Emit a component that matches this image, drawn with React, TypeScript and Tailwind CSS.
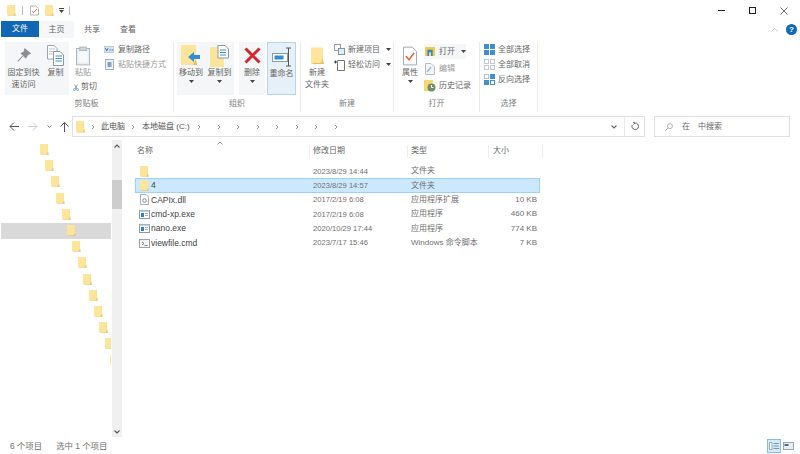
const FONT = "font-['Liberation_Sans','Noto_Sans_CJK_SC',sans-serif]";

const Folder = ({ w = 11, h = 14 }: { w?: number; h?: number }) => (
  <svg width={w} height={h} viewBox="0 0 11 14" className="shrink-0">
    <rect x="0" y="0" width="10" height="13" fill="#fbe08c" />
    <path d="M8 13 L10 9.5 L11 13.8 L2 13.8 L0 13 Z" fill="#e3c163" />
    <rect x="0" y="0" width="9" height="12.5" fill="#fde59b" />
  </svg>
);

const Arrow = () => (
  <svg width="5" height="3" viewBox="0 0 5 3" className="shrink-0">
    <path d="M0 0 H5 L2.5 3 Z" fill="#444" />
  </svg>
);

const Chevron = () => (
  <svg width="4" height="6" viewBox="0 0 4 6" className="shrink-0">
    <path d="M1 1 L3 3 L1 5" fill="none" stroke="#888" strokeWidth="0.9" />
  </svg>
);

const PinIcon = () => (
  <svg width="16" height="16" viewBox="0 0 16 18">
    <path d="M9 1 L15 6 L12 7.5 L10 11 L5 6 L8 4.5 Z M6.5 9 L1 15" fill="#8a8f96" stroke="#8a8f96" strokeWidth="1.2" />
  </svg>
);

const CopyIcon = () => (
  <svg width="17" height="21" viewBox="0 0 17 21">
    <path d="M0.5 0.5 H7 L10 3.5 V14 H0.5 Z" fill="#fff" stroke="#9aa5b1" />
    <path d="M2 4 H8 M2 6.5 H8 M2 9 H8" stroke="#b6c3cf" />
    <path d="M6.5 6.5 H13 L16.5 10 V20.5 H6.5 Z" fill="#fff" stroke="#8d99a6" />
    <path d="M8.5 11 H15 M8.5 13.5 H15 M8.5 16 H15" stroke="#3f8fce" />
  </svg>
);

const PasteIcon = () => (
  <svg width="15" height="20" viewBox="0 0 16 20">
    <rect x="0.5" y="2" width="14" height="17.5" fill="#e8edf1" stroke="#a9b4be" />
    <rect x="4" y="0.5" width="7" height="3.5" fill="#cfd6dc" stroke="#a9b4be" />
    <rect x="2.5" y="5" width="10" height="12" fill="#f6f8f9" />
  </svg>
);

const ScissorsIcon = () => (
  <svg width="9" height="11" viewBox="0 0 10 11">
    <path d="M2.5 0.5 L6.5 8 M7.5 0.5 L3.5 8" stroke="#666" strokeWidth="1" fill="none" />
    <circle cx="2.4" cy="9" r="1.6" fill="none" stroke="#2f7fc1" />
    <circle cx="7.6" cy="9" r="1.6" fill="none" stroke="#2f7fc1" />
  </svg>
);

const PathIcon = () => (
  <svg width="10" height="7" viewBox="0 0 11 7">
    <rect x="0" y="0" width="11" height="7" fill="#d5e5f3" stroke="#8fb2d0" strokeWidth="0.6" />
    <path d="M1.5 2 L3 5 L4.5 2 M6 4 H7.5 M8.5 4 H10" stroke="#2a5f8f" strokeWidth="0.9" fill="none" />
  </svg>
);

const ShortcutIcon = () => (
  <svg width="9" height="11" viewBox="0 0 9 11">
    <rect x="0.5" y="0.5" width="8" height="10" fill="#eef2f6" stroke="#a6b2bd" />
    <rect x="2.5" y="3" width="4" height="5" fill="#7ea5c6" />
  </svg>
);

const MoveIcon = () => (
  <svg width="20" height="21" viewBox="0 0 20 21">
    <rect x="0" y="0" width="15" height="20" fill="#fce49a" />
    <path d="M12 20 L15 14 L16 20 Z" fill="#e2bf60" />
    <path d="M19 10 V14 H13 V17 L7 12 L13 7 V10 Z" fill="#2f8fd6" />
  </svg>
);

const CopyToIcon = () => (
  <svg width="19" height="22" viewBox="0 0 19 22">
    <rect x="0" y="2" width="14" height="20" fill="#fce49a" />
    <path d="M8 0.5 H15 L18.5 4 V13 H8 Z" fill="#fff" stroke="#8d99a6" />
    <path d="M10 5 H16 M10 7.5 H16 M10 10 H16" stroke="#3f8fce" />
  </svg>
);

const DeleteIcon = () => (
  <svg width="17" height="17" viewBox="0 0 17 17">
    <path d="M1.5 1.5 L15.5 15.5 M15.5 1.5 L1.5 15.5" stroke="#d8232a" strokeWidth="3" />
  </svg>
);

const RenameIcon = () => (
  <svg width="20" height="20" viewBox="0 0 20 20">
    <rect x="0.5" y="6.5" width="15" height="8" fill="#fff" stroke="#8d99a6" />
    <rect x="2.5" y="8.5" width="9" height="4" fill="#2f8fd6" />
    <path d="M14 1 H19 M16.5 1 V19 M14 19 H19" stroke="#555" strokeWidth="1" fill="none" />
  </svg>
);

const NewItemIcon = () => (
  <svg width="11" height="11" viewBox="0 0 11 11">
    <rect x="0.5" y="0.5" width="6" height="6" fill="#fff" stroke="#8d99a6" />
    <rect x="4.5" y="4.5" width="6" height="6" fill="#e5edf4" stroke="#7f96ab" />
  </svg>
);

const EasyIcon = () => (
  <svg width="11" height="12" viewBox="0 0 11 12">
    <path d="M3.5 1.5 H10.5 V11.5 H3.5 Z" fill="#fff" stroke="#6f7880" />
    <path d="M0 3 H3 M1.5 1.5 V4.5" stroke="#444" />
  </svg>
);

const PropsIcon = () => (
  <svg width="14" height="20" viewBox="0 0 15 20">
    <path d="M0.5 0.5 H10 L14.5 5 V19.5 H0.5 Z" fill="#fff" stroke="#9aa5b1" />
    <path d="M3 10 L6.5 14 L12 6.5" fill="none" stroke="#e0673a" strokeWidth="1.6" />
  </svg>
);

const OpenIcon = () => (
  <svg width="10" height="9" viewBox="0 0 11 10">
    <rect x="0" y="0" width="11" height="10" fill="#f2c94c" />
    <rect x="2.5" y="3" width="6" height="7" fill="#3d86c6" />
    <rect x="4.5" y="6" width="2" height="4" fill="#f2e3a6" />
  </svg>
);

const EditIcon = () => (
  <svg width="10" height="12" viewBox="0 0 10 12">
    <path d="M0.5 0.5 H6 L9.5 4 V11.5 H0.5 Z" fill="#f2f5f8" stroke="#b4bec8" />
    <path d="M2 9 L6 4" stroke="#9db7cf" strokeWidth="1.4" />
  </svg>
);

const HistoryIcon = () => (
  <svg width="12" height="12" viewBox="0 0 12 12">
    <rect x="0" y="0" width="9" height="11" fill="#f5d774" />
    <circle cx="7.5" cy="7.5" r="4" fill="#6f8f6a" />
    <path d="M7.5 5 V7.5 H9.5" stroke="#fff" fill="none" />
  </svg>
);

const GridIcon = ({ color, dim }: { color: string; dim?: boolean }) => (
  <svg width="11" height="11" viewBox="0 0 11 11">
    <rect x="0.5" y="0.5" width="4" height="4" fill={dim ? "#fff" : color} stroke={color} />
    <rect x="6.5" y="0.5" width="4" height="4" fill={dim ? "#fff" : color} stroke={color} />
    <rect x="0.5" y="6.5" width="4" height="4" fill={dim ? "#fff" : color} stroke={color} />
    <rect x="6.5" y="6.5" width="4" height="4" fill={dim ? "#fff" : color} stroke={color} />
  </svg>
);

const InvertIcon = () => (
  <svg width="11" height="11" viewBox="0 0 11 11">
    <rect x="0.5" y="0.5" width="4" height="4" fill="#fff" stroke="#b8c0c8" />
    <rect x="6.5" y="0.5" width="4" height="4" fill="#3d8fd1" stroke="#3d8fd1" />
    <rect x="0.5" y="6.5" width="4" height="4" fill="#3d8fd1" stroke="#3d8fd1" />
    <rect x="6.5" y="6.5" width="4" height="4" fill="#fff" stroke="#3d8fd1" />
  </svg>
);

const BigButton = ({
  icon,
  lines,
  width,
  arrow,
  className = "",
}: {
  icon: React.ReactNode;
  lines: string[];
  width: number;
  arrow?: boolean;
  className?: string;
}) => (
  <div className={`flex h-[53px] shrink-0 flex-col items-center pt-[2px] ${className}`} style={{ width }}>
    <div className="flex h-[23px] shrink-0 items-center justify-center">{icon}</div>
    {lines.map((l) => (
      <span key={l} className="text-[8px] leading-[12px] whitespace-nowrap text-[#666]">
        {l}
      </span>
    ))}
    {arrow && (
      <div className="mt-[1px]">
        <Arrow />
      </div>
    )}
  </div>
);

const SmallRow = ({
  icon,
  label,
  arrow,
  muted,
  className = "",
}: {
  icon: React.ReactNode;
  label: string;
  arrow?: boolean;
  muted?: boolean;
  className?: string;
}) => (
  <div className={`flex h-[15px] items-center gap-[3px] whitespace-nowrap ${className}`}>
    <span className="flex w-[12px] shrink-0 justify-center">{icon}</span>
    <span className={`text-[8px] leading-[12px] ${muted ? "text-[#999]" : "text-[#666]"}`}>{label}</span>
    {arrow && (
      <span className="ml-[3px] flex">
        <Arrow />
      </span>
    )}
  </div>
);

const Group = ({ width, label, children }: { width: number; label: string; children: React.ReactNode }) => (
  <div className="flex shrink-0 flex-col border-r border-[#ebebeb]" style={{ width }}>
    <div className="flex h-[53px] items-start">{children}</div>
    <div className="mt-[3px] text-center text-[8px] leading-[12px] text-[#808080]">{label}</div>
  </div>
);

const TREE_COUNT = 14;

const files = [
  { name: "", date: "2023/8/29 14:44", type: "文件夹", size: "", icon: "folder" },
  { name: "4", date: "2023/8/29 14:57", type: "文件夹", size: "", icon: "folder", selected: true },
  { name: "CAPIx.dll", date: "2017/2/19 6:08", type: "应用程序扩展", size: "10 KB", icon: "dll" },
  { name: "cmd-xp.exe", date: "2017/2/19 6:08", type: "应用程序", size: "460 KB", icon: "exe" },
  { name: "nano.exe", date: "2020/10/29 17:44", type: "应用程序", size: "774 KB", icon: "exe" },
  { name: "viewfile.cmd", date: "2023/7/17 15:46", type: "Windows 命令脚本", size: "7 KB", icon: "cmd" },
];

const FileIcon = ({ kind }: { kind: string }) => {
  if (kind === "folder") return <Folder w={9} h={11} />;
  if (kind === "dll")
    return (
      <svg width="9" height="11" viewBox="0 0 9 11">
        <path d="M0.5 0.5 H6 L8.5 3 V10.5 H0.5 Z" fill="#fff" stroke="#a5adb5" />
        <circle cx="4.5" cy="6.5" r="1.8" fill="none" stroke="#7b8791" />
      </svg>
    );
  if (kind === "exe")
    return (
      <svg width="11" height="9" viewBox="0 0 11 9">
        <rect x="0.5" y="0.5" width="10" height="8" fill="#fff" stroke="#8d99a6" />
        <rect x="0.5" y="0.5" width="10" height="1.5" fill="#bcd0e2" />
        <rect x="2" y="3" width="3" height="4" fill="#2f7fc1" />
        <path d="M6 3.5 H9 M6 5.5 H9" stroke="#9db1c4" />
      </svg>
    );
  return (
    <svg width="11" height="9" viewBox="0 0 11 9">
      <rect x="0.5" y="0.5" width="10" height="8" fill="#f4f5f6" stroke="#9aa3ab" />
      <path d="M3 3 L5 4.5 L3 6 M5.5 6.5 H8.5" stroke="#7d868e" fill="none" />
    </svg>
  );
};

export default function App() {
  return (
    <div className={`flex h-[454px] w-[800px] flex-col overflow-hidden bg-white ${FONT}`}>
      {/* title bar */}
      <div className="flex h-[21px] shrink-0 items-center pl-[7px]">
        <Folder w={9} h={11} />
        <div className="ml-[6px] h-[9px] w-px bg-[#bbb]" />
        <svg width="9" height="11" viewBox="0 0 10 11" className="ml-[7px]">
          <path d="M0.5 0.5 H6.5 L9.5 3.5 V10.5 H0.5 Z" fill="#fff" stroke="#aaa" />
          <path d="M2.5 6 L4 8 L7.5 4" fill="none" stroke="#d8623a" />
        </svg>
        <div className="ml-[6px]">
          <Folder w={9} h={11} />
        </div>
        <div className="ml-[5px] flex flex-col items-center gap-[1px]">
          <div className="h-px w-[5px] bg-[#444]" />
          <Arrow />
        </div>
        <div className="ml-[5px] h-[9px] w-px bg-[#bbb]" />
        <div className="ml-auto flex items-center">
          <div className="flex w-[31px] justify-center">
            <div className="h-px w-[7px] bg-[#222]" />
          </div>
          <div className="flex w-[31px] justify-center">
            <div className="h-[7px] w-[7px] border border-[#222]" />
          </div>
          <div className="flex w-[31px] justify-center">
            <svg width="8" height="8" viewBox="0 0 8 8">
              <path d="M0.5 0.5 L7.5 7.5 M7.5 0.5 L0.5 7.5" stroke="#444" strokeWidth="0.8" />
            </svg>
          </div>
          <div className="w-px" />
        </div>
      </div>

      {/* tabs */}
      <div className="flex h-[17px] shrink-0 items-center">
        <div className="ml-px flex h-[16px] w-[38px] items-center justify-center self-start bg-[#0f67b5] text-[8px] text-white">文件</div>
        <div className="flex h-[17px] w-[35px] items-center justify-center bg-[#f5f6f7] text-[8px] text-[#666]">主页</div>
        <div className="flex w-[36px] items-center justify-center text-[8px] text-[#666]">共享</div>
        <div className="flex w-[36px] items-center justify-center text-[8px] text-[#666]">查看</div>
        <div className="mr-[3px] ml-auto flex items-center gap-[8px]">
          <svg width="7" height="4" viewBox="0 0 7 4">
            <path d="M0.5 3.5 L3.5 0.5 L6.5 3.5" fill="none" stroke="#ccc" />
          </svg>
          <div className="flex h-[11px] w-[11px] items-center justify-center rounded-full bg-[#0f67b5] text-[8px] leading-none font-bold text-white">?</div>
        </div>
      </div>

      {/* ribbon */}
      <div className="flex h-[74px] shrink-0 pt-[4px]">
        <Group width={174} label="剪贴板">
          <div className="ml-[5px] flex h-[53px] w-[64px] shrink-0 bg-[#f5f6f7]">
            <BigButton icon={<PinIcon />} lines={["固定到快", "速访问"]} width={37} />
            <BigButton icon={<CopyIcon />} lines={["复制"]} width={27} />
          </div>
          <div className="flex w-[28px] shrink-0 flex-col pt-[2px]">
            <div className="flex h-[23px] items-center justify-center">
              <PasteIcon />
            </div>
            <span className="text-center text-[8px] leading-[12px] text-[#999]">粘贴</span>
            <div className="mt-[2px] flex h-[12px] items-center gap-[2px] pl-[4px] whitespace-nowrap">
              <ScissorsIcon />
              <span className="text-[8px] leading-[12px] text-[#666]">剪切</span>
            </div>
          </div>
          <div className="ml-[6px]">
            <SmallRow icon={<PathIcon />} label="复制路径" />
            <SmallRow icon={<ShortcutIcon />} label="粘贴快捷方式" muted />
          </div>
        </Group>
        <Group width={127} label="组织">
          <div className="ml-[3px] flex h-[53px] w-[57px] shrink-0 bg-[#f5f6f7]">
            <BigButton icon={<MoveIcon />} lines={["移动到"]} width={28} arrow />
            <BigButton icon={<CopyToIcon />} lines={["复制到"]} width={29} arrow />
          </div>
          <BigButton icon={<DeleteIcon />} lines={["删除"]} width={26} arrow className="ml-[5px] bg-[#f5f6f7]" />
          <BigButton
            icon={<RenameIcon />}
            lines={["重命名"]}
            width={29}
            className="ml-[2px] border border-[#b9d3ea] bg-[#e6f0f9]"
          />
        </Group>
        <Group width={93} label="新建">
          <BigButton icon={<Folder w={13} h={18} />} lines={["新建", "文件夹"]} width={30} className="ml-px" />
          <div className="ml-px">
            <SmallRow icon={<NewItemIcon />} label="新建项目" arrow />
            <SmallRow icon={<EasyIcon />} label="轻松访问" arrow />
          </div>
        </Group>
        <Group width={86} label="打开">
          <BigButton icon={<PropsIcon />} lines={["属性"]} width={24} arrow className="ml-[4px]" />
          <div className="ml-[2px] flex flex-col gap-[2px] pt-[2px]">
            <SmallRow icon={<OpenIcon />} label="打开" arrow className="w-[42px] bg-[#f5f6f7]" />
            <SmallRow icon={<EditIcon />} label="编辑" muted />
            <SmallRow icon={<HistoryIcon />} label="历史记录" />
          </div>
        </Group>
        <Group width={58} label="选择">
          <div className="ml-[3px]">
            <SmallRow icon={<GridIcon color="#3d8fd1" />} label="全部选择" />
            <SmallRow icon={<GridIcon color="#c4c9ce" dim />} label="全部取消" />
            <SmallRow icon={<InvertIcon />} label="反向选择" />
          </div>
        </Group>
      </div>

      {/* address bar */}
      <div className="mt-[4px] flex h-[21px] shrink-0 items-center">
        <div className="flex w-[72px] shrink-0 items-center pl-[9px]">
          <svg width="10" height="9" viewBox="0 0 10 9">
            <path d="M5 0.5 L1 4.5 L5 8.5 M1 4.5 H10" fill="none" stroke="#555" />
          </svg>
          <svg width="10" height="9" viewBox="0 0 10 9" className="ml-[9px]">
            <path d="M5 0.5 L9 4.5 L5 8.5 M0 4.5 H9" fill="none" stroke="#ccc" />
          </svg>
          <svg width="5" height="4" viewBox="0 0 5 4" className="ml-[9px]">
            <path d="M0.5 0.5 L2.5 2.5 L4.5 0.5" fill="none" stroke="#777" />
          </svg>
          <svg width="9" height="10" viewBox="0 0 9 10" className="ml-[8px]">
            <path d="M0.5 4.5 L4.5 0.5 L8.5 4.5 M4.5 0.5 V10" fill="none" stroke="#555" />
          </svg>
        </div>
        <div className="flex h-[21px] w-[573px] shrink-0 items-center border border-[#e0e0e0]">
          <div className="ml-[3px]">
            <Folder w={9} h={12} />
          </div>
          <div className="ml-[6px]">
            <Chevron />
          </div>
          <span className="ml-[6px] text-[8px] whitespace-nowrap text-[#555]">此电脑</span>
          <div className="ml-[6px]">
            <Chevron />
          </div>
          <span className="ml-[7px] w-[49px] text-[8px] whitespace-nowrap text-[#555]">本地磁盘 (C:)</span>
          <div className="ml-[6px] flex gap-[15.5px]">
            {[0, 1, 2, 3, 4, 5, 6, 7].map((i) => (
              <Chevron key={i} />
            ))}
          </div>
          <div className="ml-auto flex h-full items-center">
            <svg width="6" height="4" viewBox="0 0 6 4" className="mr-[7px]">
              <path d="M0.5 0.5 L3 3 L5.5 0.5" fill="none" stroke="#666" strokeWidth="1.1" />
            </svg>
            <div className="flex h-full w-[20px] items-center justify-center border-l border-[#e8e8e8]">
              <svg width="8" height="9" viewBox="0 0 8 9">
                <path d="M4 1 A3.3 3.3 0 1 1 1.2 3 M4 1 L2 0.2 M4 1 L2.4 2.6" fill="none" stroke="#666" />
              </svg>
            </div>
          </div>
        </div>
        <div className="ml-[9px] flex h-[21px] w-[136px] shrink-0 items-center border border-[#e0e0e0] pl-[10px]">
          <svg width="8" height="8" viewBox="0 0 9 9">
            <circle cx="5.5" cy="3.5" r="2.8" fill="none" stroke="#aaa" />
            <path d="M3.5 5.5 L0.5 8.5" stroke="#aaa" />
          </svg>
          <span className="ml-[9px] text-[8px] text-[#666]">在</span>
          <span className="ml-[8px] text-[8px] text-[#666]">中搜索</span>
        </div>
      </div>

      {/* main */}
      <div className="flex min-h-0 flex-1 pt-[3px]">
        {/* nav tree */}
        <div className="relative h-full w-[112px] shrink-0 overflow-hidden">
          <div className="absolute top-[83px] left-px h-[16px] w-[110px] bg-[#d9d9d9]" />
          <div className="absolute top-0 left-0 h-full w-[111px] overflow-hidden">
            {Array.from({ length: TREE_COUNT }).map((_, i) => (
              <div key={i} className="absolute" style={{ left: 40 + i * 5.4, top: 4 + i * 16.2 }}>
                <Folder w={9} h={11} />
              </div>
            ))}
          </div>
        </div>
        {/* scrollbar */}
        <div className="flex h-[297px] w-[10px] shrink-0 flex-col items-center justify-between bg-[#f0f0f0] pt-[4px] pb-[3px]">
          <div className="relative w-full">
            <svg width="6" height="4" viewBox="0 0 6 4" className="mx-auto">
              <path d="M0.5 3.5 L3 1 L5.5 3.5" fill="none" stroke="#555" strokeWidth="1.1" />
            </svg>
            <div className="absolute top-[36px] left-0 h-[29px] w-full bg-[#cdcdcd]" />
          </div>
          <svg width="6" height="4" viewBox="0 0 6 4">
            <path d="M0.5 0.5 L3 3 L5.5 0.5" fill="none" stroke="#555" strokeWidth="1.1" />
          </svg>
        </div>
        {/* list */}
        <div className="min-w-0 flex-1 pl-[13px]">
          <div className="relative flex h-[22px] items-center text-[8px] text-[#666]">
            <svg width="6" height="4" viewBox="0 0 6 4" className="absolute top-[1px] left-[82px]">
              <path d="M0.5 3.5 L3 1 L5.5 3.5" fill="none" stroke="#999" />
            </svg>
            <span className="w-[174px] pl-[2px]">名称</span>
            <span className="w-[98px] border-l border-[#eee] pl-[3px]">修改日期</span>
            <span className="w-[81px] border-l border-[#eee] pl-[3px]">类型</span>
            <span className="w-[54px] border-l border-[#eee] pl-[4px]">大小</span>
            <span className="h-[14px] w-px bg-[#eee]" />
          </div>
          <div className="mt-[2px] w-[405px]">
            {files.map((f) => (
              <div
                key={f.date + f.name}
                className={`flex h-[14.4px] items-center text-[8px] ${
                  f.selected ? "border border-[#99d1ff] bg-[#cce8ff]" : "border border-transparent"
                }`}
              >
                <div className="flex w-[174px] items-center gap-[1px] pl-[3px]">
                  <span className="flex w-[11px] justify-center">
                    <FileIcon kind={f.icon} />
                  </span>
                  <span className="text-[8.5px] text-[#444]">{f.name}</span>
                </div>
                <span className="w-[98px] pl-[3px] text-[7.6px] whitespace-nowrap text-[#707070]">{f.date}</span>
                <span className="w-[81px] pl-[3px] whitespace-nowrap text-[#707070]">{f.type}</span>
                <span className="w-[48px] text-right whitespace-nowrap text-[#707070]">{f.size}</span>
              </div>
            ))}
          </div>
        </div>
      </div>

      {/* status bar */}
      <div className="flex h-[16px] shrink-0 items-center pl-[10px] text-[8.4px] text-[#707070]">
        <span>6 个项目</span>
        <span className="ml-[14px]">选中 1 个项目</span>
        <div className="mr-[6px] ml-auto flex items-center gap-[2px]">
          <div className="flex h-[14px] w-[14px] items-center justify-center border border-[#7fc0e8] bg-[#d5ebf8]">
            <svg width="10" height="8" viewBox="0 0 10 8">
              <path d="M0.5 0.5 H3 V7.5 H0.5 Z" fill="#fff" stroke="#6a7f90" strokeWidth="0.6" />
              <path d="M4.5 1.5 H10 M4.5 4 H10 M4.5 6.5 H10" stroke="#6a7f90" strokeWidth="0.8" />
            </svg>
          </div>
          <svg width="11" height="8" viewBox="0 0 11 8">
            <rect x="0.5" y="0.5" width="10" height="7" fill="#e9eef2" stroke="#9aa8b4" />
            <rect x="1.5" y="2" width="4" height="2" fill="#4f6f8d" />
          </svg>
        </div>
      </div>
    </div>
  );
}
